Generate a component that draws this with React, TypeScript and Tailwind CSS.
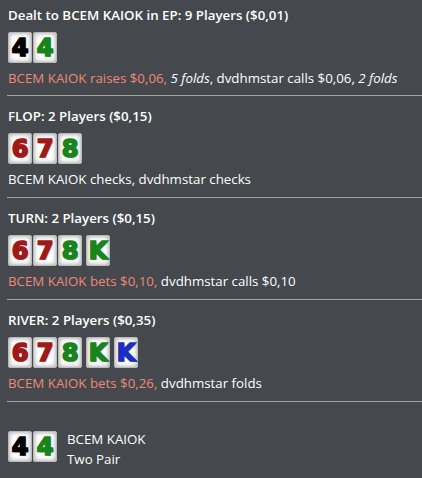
import React from 'react'

type Card = { r: string; c: string; gap?: boolean }

const colors: Record<string, string> = {
  red: 'text-[#a01818]',
  green: 'text-[#18841c]',
  black: 'text-black',
  blue: 'text-[#1a2fc0]',
}

function PlayingCard({ r, c, gap }: Card) {
  return (
    <div
      className={`w-[24px] h-[31px] flex items-center justify-center bg-white border border-[#b9b9b9] rounded-[2px] shadow-[inset_0_0_5px_rgba(0,0,0,0.4)] ${gap ? 'ml-[3px]' : ''}`}
    >
      <span
        className={`font-['DejaVu_Sans',sans-serif] font-bold text-[24px] leading-none [-webkit-text-stroke:1.7px_currentColor] [text-shadow:1px_1px_1px_rgba(0,0,0,0.4)] ${colors[c]}`}
      >
        {r}
      </span>
    </div>
  )
}

function Cards({ cards }: { cards: Card[] }) {
  return (
    <div className="flex gap-[1px]">
      {cards.map((c, i) => <PlayingCard key={i} {...c} />)}
    </div>
  )
}

const hole: Card[] = [{ r: '4', c: 'black' }, { r: '4', c: 'green' }]
const flop: Card[] = [{ r: '6', c: 'red' }, { r: '7', c: 'red' }, { r: '8', c: 'green' }]
const turn: Card[] = [...flop, { r: 'K', c: 'green', gap: true }]
const river: Card[] = [...turn, { r: 'K', c: 'blue', gap: true }]

const hero = 'text-[#f08878]'

function Street({ title, cards, first, children }: { title: string; cards: Card[]; first?: boolean; children: React.ReactNode }) {
  return (
    <div className={`ml-[7px] border-b border-[#a3a3a3] pl-[1px] ${first ? 'pt-[6px] pb-[8px]' : 'pt-[11px] pb-[9px]'}`}>
      <div className="h-[18px] leading-[18px] font-semibold">{title}</div>
      <div className="mt-[8px]"><Cards cards={cards} /></div>
      <div className="mt-[6px] h-[18px] leading-[18px] whitespace-nowrap">{children}</div>
    </div>
  )
}

export default function App() {
  return (
    <div className="w-[422px] h-[478px] bg-[#45484c] text-white text-[13.3px] font-['Segoe_UI','Open_Sans',sans-serif] overflow-hidden">
      <Street first title="Dealt to BCEM KAIOK in EP: 9 Players ($0,01)" cards={hole}>
        <span className={hero}>BCEM KAIOK raises $0,06, </span>
        <i>5 folds</i>, dvdhmstar calls $0,06, <i>2 folds</i>
      </Street>
      <Street title="FLOP: 2 Players ($0,15)" cards={flop}>
        BCEM KAIOK checks, dvdhmstar checks
      </Street>
      <Street title="TURN: 2 Players ($0,15)" cards={turn}>
        <span className={hero}>BCEM KAIOK bets $0,10, </span>dvdhmstar calls $0,10
      </Street>
      <Street title="RIVER: 2 Players ($0,35)" cards={river}>
        <span className={hero}>BCEM KAIOK bets $0,26, </span>dvdhmstar folds
      </Street>
      <div className="pl-[8px] pt-[29px] flex items-start gap-[10px]">
        <Cards cards={hole} />
        <div className="leading-[20px] -mt-[2px]">
          <div>BCEM KAIOK</div>
          <div>Two Pair</div>
        </div>
      </div>
    </div>
  )
}
